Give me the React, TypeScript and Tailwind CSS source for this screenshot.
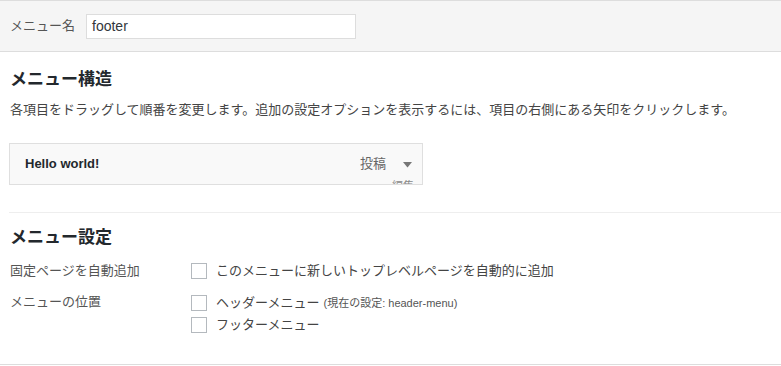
import React from "react";

const font = { fontFamily: '"Liberation Sans", "Noto Sans CJK JP", sans-serif' };

function Checkbox() {
  return <span className="inline-block w-[16px] h-[16px] border border-[#b4b9be] bg-white shrink-0" />;
}

export default function App() {
  return (
    <div className="w-[781px] h-[366px] bg-white text-[#444] overflow-hidden" style={font}>
      <div className="border-b border-[#dddddd]">
        <div className="h-[52px] border-y border-[#dddddd] bg-[#f5f5f5] flex items-center px-[10px]">
          <span className="w-[76px] text-[13px] text-[#555]">メニュー名</span>
          <div className="w-[270px] h-[25px] border border-[#dddddd] bg-white flex items-center pl-[5px] text-[14px] text-[#32373c]">
            footer
          </div>
        </div>
        <div className="pl-[10px]">
          <h3 className="mt-[16px] h-[24px] leading-[24px] text-[17px] font-bold text-[#23282d]">メニュー構造</h3>
          <p className="mt-[8px] h-[20px] leading-[20px] text-[13px] text-[#444]">
            各項目をドラッグして順番を変更します。追加の設定オプションを表示するには、項目の右側にある矢印をクリックします。
          </p>
          <div className="relative mt-[23px] -ml-[1px] w-[414px] h-[42px] border border-[#dfdfdf] bg-[#f9f9f9] overflow-hidden flex items-center pl-[15px] pr-[10px]">
            <span className="text-[13px] font-bold text-[#23282d] flex-1">Hello world!</span>
            <span className="text-[13px] text-[#666] mr-[17px]">投稿</span>
            <svg width="9" height="6" viewBox="0 0 9 6" className="mt-[1px]">
              <polygon points="0,0 9,0 4.5,5.5" fill="#777" />
            </svg>
            <span className="absolute left-[382px] top-[37px] text-[11px] text-[#888] leading-none">編集</span>
          </div>
          <div className="mt-[27px] -ml-[1px] border-t border-[#eeeeee]" />
          <h3 className="mt-[13px] h-[24px] leading-[24px] text-[17px] font-bold text-[#23282d]">メニュー設定</h3>
          <div className="mt-[11px] flex h-[20px] items-center">
            <span className="w-[181px] text-[13px] text-[#555]">固定ページを自動追加</span>
            <Checkbox />
            <span className="ml-[9px] text-[13px] text-[#444]">このメニューに新しいトップレベルページを自動的に追加</span>
          </div>
          <div className="mt-[11px] flex">
            <span className="w-[181px] h-[20px] leading-[20px] text-[13px] text-[#555]">メニューの位置</span>
            <div className="flex flex-col">
              <div className="flex h-[22px] items-center">
                <Checkbox />
                <span className="ml-[9px] text-[13px] text-[#444]">ヘッダーメニュー</span>
                <span className="ml-[4px] text-[11px] text-[#555]">(現在の設定: header-menu)</span>
              </div>
              <div className="flex h-[22px] items-center">
                <Checkbox />
                <span className="ml-[9px] text-[13px] text-[#444]">フッターメニュー</span>
              </div>
            </div>
          </div>
          <div className="h-[28px]" />
        </div>
      </div>
    </div>
  );
}
